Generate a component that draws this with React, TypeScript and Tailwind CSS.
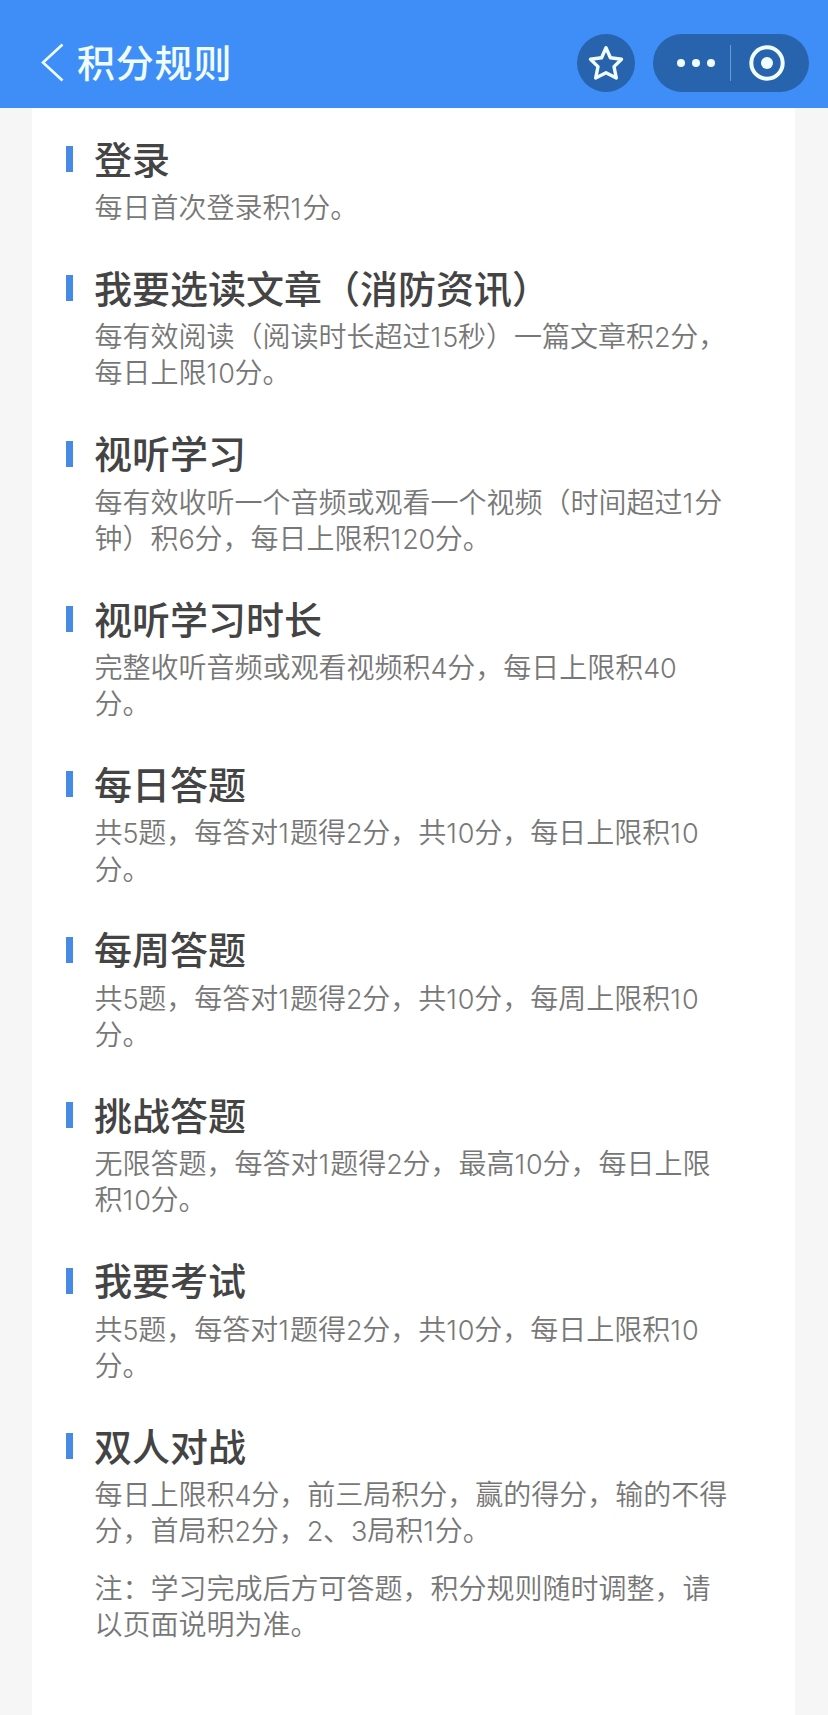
import React from "react";
import { clsx } from "clsx";

interface Rule {
  title: string;
  lines: string[];
}

const rules: Rule[] = [
  { title: "登录", lines: ["每日首次登录积1分。"] },
  {
    title: "我要选读文章（消防资讯）",
    lines: ["每有效阅读（阅读时长超过15秒）一篇文章积2分，", "每日上限10分。"],
  },
  {
    title: "视听学习",
    lines: ["每有效收听一个音频或观看一个视频（时间超过1分", "钟）积6分，每日上限积120分。"],
  },
  { title: "视听学习时长", lines: ["完整收听音频或观看视频积4分，每日上限积40", "分。"] },
  { title: "每日答题", lines: ["共5题，每答对1题得2分，共10分，每日上限积10", "分。"] },
  { title: "每周答题", lines: ["共5题，每答对1题得2分，共10分，每周上限积10", "分。"] },
  { title: "挑战答题", lines: ["无限答题，每答对1题得2分，最高10分，每日上限", "积10分。"] },
  { title: "我要考试", lines: ["共5题，每答对1题得2分，共10分，每日上限积10", "分。"] },
  { title: "双人对战", lines: ["每日上限积4分，前三局积分，赢的得分，输的不得", "分，首局积2分，2、3局积1分。"] },
];

const note = ["注：学习完成后方可答题，积分规则随时调整，请", "以页面说明为准。"];

// Digits use a latin face; its "1" is narrow, so it gets a bit more room
function Line({ text }: { text: string }) {
  return (
    <p className="whitespace-nowrap">
      {text.split(/(\d)/).map((part, i) =>
        /^\d$/.test(part) ? (
          <span
            key={i}
            className={clsx(
              "font-['Inter'] text-[27px] leading-none",
              part === "1" ? "tracking-[1px]" : "tracking-[-0.3px]"
            )}
          >
            {part}
          </span>
        ) : (
          part
        )
      )}
    </p>
  );
}

function Paragraph({ lines }: { lines: string[] }) {
  return (
    <div className="pl-[28.5px] text-[28px] leading-[36.2px] font-[350] text-[#777]">
      {lines.map((line) => (
        <Line key={line} text={line} />
      ))}
    </div>
  );
}

function Header() {
  return (
    <header className="h-[108px] bg-[#3f8ef8] flex items-center pt-[18px] pl-[40px] pr-[19px]">
      <svg width="24" height="40" viewBox="0 0 24 40" fill="none" stroke="#f0fdff" strokeWidth="2.6">
        <path d="M22.5 1.5 L3 19.5 L22.5 37.5" />
      </svg>
      <h1 className="ml-[13px] mb-[4px] text-[38px] leading-[48px] tracking-[0.8px] font-medium text-[#f0fdff]">积分规则</h1>

      <button className="ml-auto size-[58px] rounded-full bg-[#2863ae] flex items-center justify-center">
        <svg width="38" height="38" viewBox="0 0 38 38" fill="none" stroke="#f0fdff" strokeWidth="3.4" strokeLinejoin="round">
          <path d="M19 3.8 L23.4 13.7 L34.5 15.3 L27 22.6 L29.3 34 L19 28.8 L8.7 34 L11 22.6 L3.5 15.3 L14.6 13.7 Z" />
        </svg>
      </button>
      <div className="ml-[18px] w-[156px] h-[58px] rounded-full bg-[#2863ae] flex items-center">
        <div className="ml-[23.5px] flex gap-[7px]">
          <span className="size-[8px] rounded-full bg-[#f0fdff]" />
          <span className="size-[8px] rounded-full bg-[#f0fdff]" />
          <span className="size-[8px] rounded-full bg-[#f0fdff]" />
        </div>
        <span className="ml-[15.5px] w-px h-[36px] bg-[#6b99d2]" />
        <svg className="ml-[18px]" width="36" height="36" viewBox="0 0 36 36" fill="none">
          <circle cx="18" cy="18" r="15.7" stroke="#f0fdff" strokeWidth="4" />
          <circle cx="18" cy="18" r="6" fill="#f0fdff" />
        </svg>
      </div>
    </header>
  );
}

function App() {
  return (
    <div
      lang="zh-CN"
      className="w-[828px] h-[1715px] overflow-hidden flex flex-col bg-[#f6f6f6] font-['Noto_Sans_CJK_SC',sans-serif]"
    >
      <Header />
      <main className="flex-1 ml-[32px] mr-[33px] pl-[34px] pt-[27px] bg-white">
        <div className="flex flex-col gap-[40px]">
          {rules.map((rule) => (
            <section key={rule.title}>
              <div className="flex items-center h-[48px] mb-[5px]">
                <span className="w-[7px] h-[26px] bg-[#468ae6]" />
                <h2 className="ml-[21px] mb-[3px] text-[38px] leading-[48px] font-medium text-[#444] whitespace-nowrap">
                  {rule.title}
                </h2>
              </div>
              <Paragraph lines={rule.lines} />
            </section>
          ))}
        </div>
        <div className="mt-[21.5px]">
          <Paragraph lines={note} />
        </div>
      </main>
    </div>
  );
}

export default App;
